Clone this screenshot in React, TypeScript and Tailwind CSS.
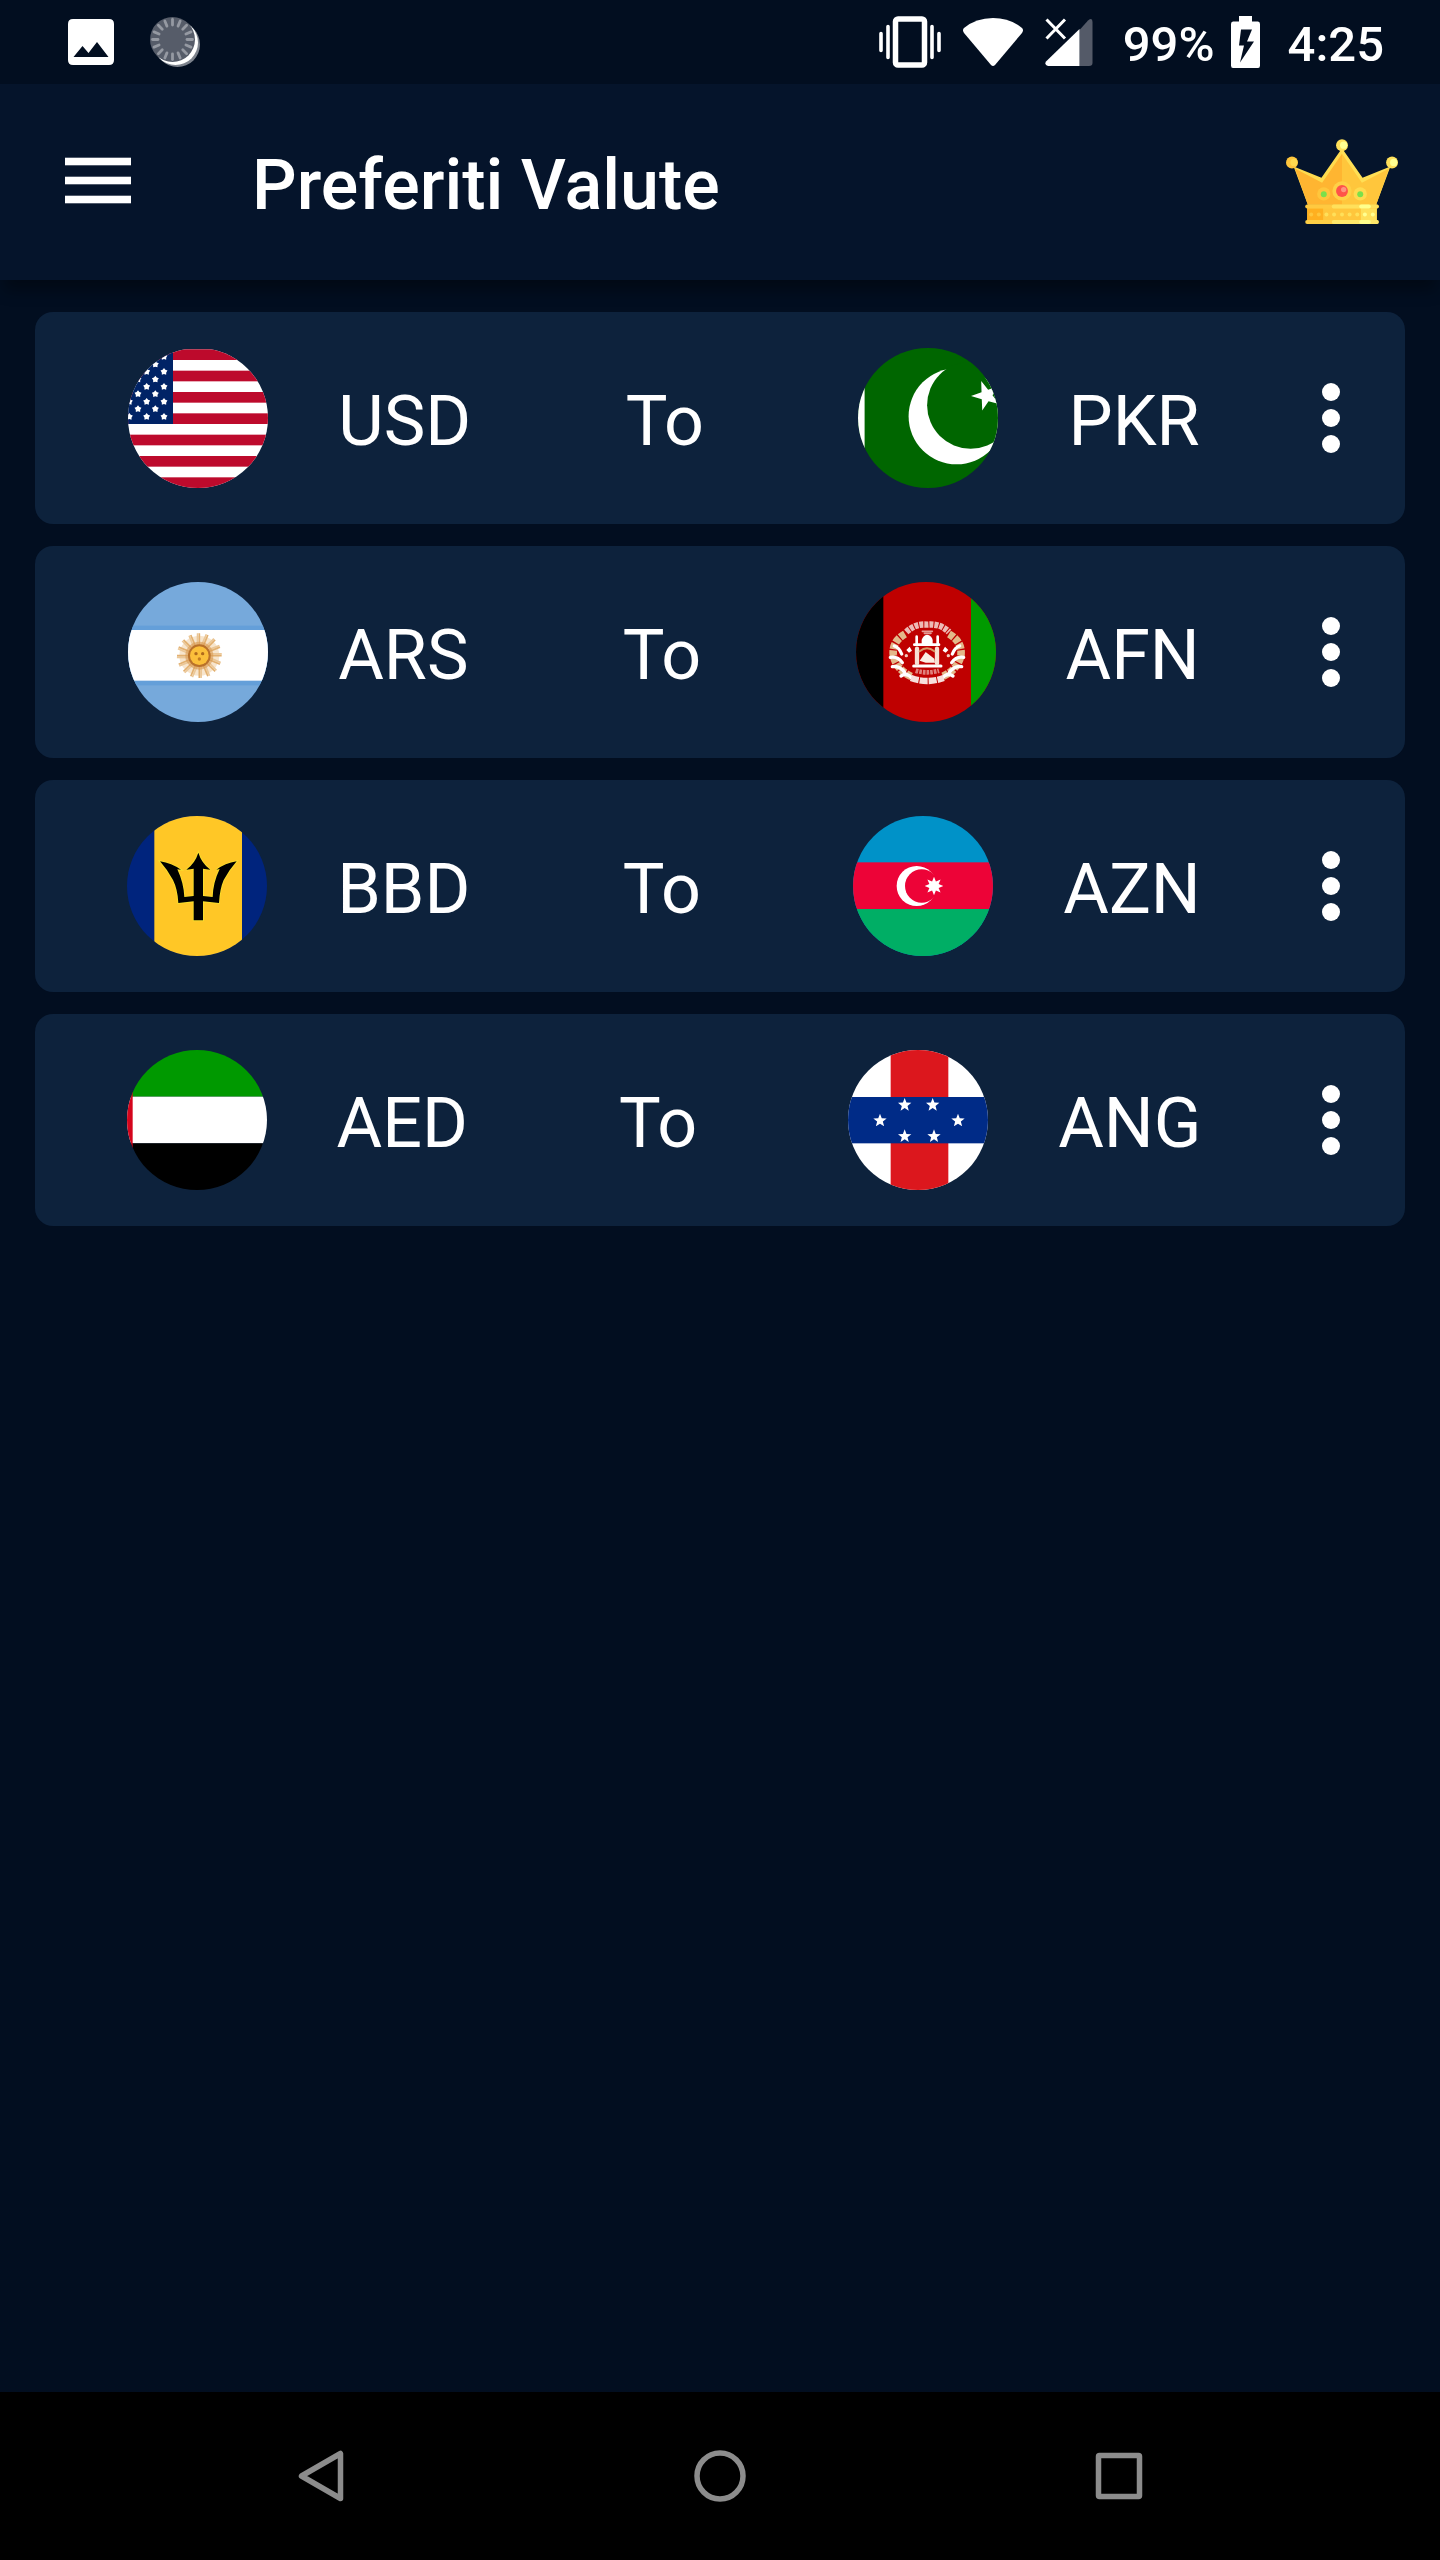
import React from "react";

type FlagProps = { box: string; label: string; children: React.ReactNode };

function Flag({ box, label, children }: FlagProps) {
  return (
    <svg viewBox={box} role="img" aria-label={label} className="size-35 shrink-0 rounded-full">
      {children}
    </svg>
  );
}

/** Corner list of a regular star polygon. */
function starPoints(cx: number, cy: number, outer: number, inner: number, tips = 5, start = -90) {
  const pts: string[] = [];
  for (let i = 0; i < tips * 2; i++) {
    const r = i % 2 === 0 ? outer : inner;
    const a = ((start + (i * 180) / tips) * Math.PI) / 180;
    pts.push(`${(cx + r * Math.cos(a)).toFixed(2)},${(cy + r * Math.sin(a)).toFixed(2)}`);
  }
  return pts.join(" ");
}

function UsaFlag() {
  const stripes = [0, 1, 2, 3, 4, 5, 6];
  const oddCols = [195, 143, 91];
  const evenCols = [169, 117];
  return (
    <Flag box="87 54 420 420" label="United States">
      <rect x="87" y="58" width="420" height="416" fill="#fff" />
      {stripes.map((i) => (
        <rect key={i} x="87" y={58 + i * 64} width="420" height="32" fill="#bd0a2c" />
      ))}
      <rect x="87" y="58" width="135" height="224" fill="#002366" />
      {oddCols.map((x) =>
        [80, 125, 170, 215, 260].map((y) => (
          <polygon key={`${x}-${y}`} points={starPoints(x, y, 11, 7)} fill="#fff" />
        )),
      )}
      {evenCols.map((x) =>
        [103, 148, 192, 237].map((y) => (
          <polygon key={`${x}-${y}`} points={starPoints(x, y, 11, 7)} fill="#fff" />
        )),
      )}
    </Flag>
  );
}

function PakistanFlag() {
  return (
    <Flag box="0 0 140 140" label="Pakistan">
      <rect width="140" height="140" fill="#006600" />
      <rect width="6.6" height="140" fill="#fff" />
      <circle cx="98.6" cy="68.3" r="48" fill="#fff" />
      <circle cx="112.6" cy="57.2" r="43.5" fill="#006600" />
      <polygon points={starPoints(128.5, 47.5, 15.5, 6, 5, 250)} fill="#fff" />
    </Flag>
  );
}

function ArgentinaFlag() {
  const rays = Array.from({ length: 32 }, (_, i) => i * 11.25);
  return (
    <Flag box="87 36 420 420" label="Argentina">
      <rect x="87" y="36" width="420" height="420" fill="#76a9db" />
      <rect x="87" y="167" width="420" height="179" fill="#649fd9" />
      <rect x="87" y="180" width="420" height="152" fill="#fff" />
      <circle cx="301" cy="257" r="60" fill="#f5dfc0" opacity="0.8" />
      {rays.map((a, i) => (
        <line
          key={a}
          x1="301"
          y1="227"
          x2={i % 2 ? 309 : 301}
          y2="190"
          stroke={i % 2 ? "#ebc797" : "#e2b070"}
          strokeWidth="5"
          transform={`rotate(${a} 301 257)`}
        />
      ))}
      <circle cx="301" cy="257" r="42" fill="#d89a52" opacity="0.6" />
      <circle cx="301" cy="257" r="34" fill="#b9712a" />
      <circle cx="301" cy="257" r="28" fill="#fbbf3b" />
      <circle cx="291" cy="251" r="5" fill="#b06a1c" />
      <circle cx="311" cy="251" r="5" fill="#b06a1c" />
      <circle cx="301" cy="267" r="5" fill="#c27d22" />
    </Flag>
  );
}

function AfghanistanFlag() {
  return (
    <Flag box="75 36 420 420" label="Afghanistan">
      <rect x="75" y="36" width="420" height="420" fill="#bf0000" />
      <rect x="75" y="36" width="82" height="420" fill="#000" />
      <rect x="420" y="36" width="75" height="420" fill="#009a00" />
      <g fill="none" strokeLinecap="round">
        <path d="M222 192 Q182 215 187 255 Q194 298 242 320" stroke="#e3b98a" strokeWidth="23" strokeDasharray="17 4" strokeLinecap="butt" />
        <path d="M354 192 Q394 215 390 255 Q382 298 334 320" stroke="#e3b98a" strokeWidth="23" strokeDasharray="17 4" strokeLinecap="butt" />
        <path d="M190 228 Q204 232 212 252 M178 262 Q200 258 214 278 M184 290 Q206 286 222 308 M210 318 Q228 306 244 326" stroke="#fff" strokeWidth="10" />
        <path d="M386 228 Q372 232 364 252 M398 262 Q376 258 362 278 M392 290 Q370 286 354 308 M366 318 Q348 306 332 326" stroke="#fff" strokeWidth="10" />
        <path d="M226 186 Q254 160 288 164 Q328 160 354 186" stroke="#edbab5" strokeWidth="19" strokeDasharray="12 3" strokeLinecap="butt" />
        <path d="M274 184 H304 M280 190 H300" stroke="#e59a94" strokeWidth="5" />
        <path d="M240 324 Q288 342 338 324" stroke="#f7dfdc" strokeWidth="19" strokeDasharray="24 3" strokeLinecap="butt" />
        <path d="M254 302 Q288 312 324 302" stroke="#e0807c" strokeWidth="14" strokeDasharray="8 3" strokeLinecap="butt" />
        <path d="M248 288 H330" stroke="#fff" strokeWidth="9" />
        <path d="M250 224 H324" stroke="#fff" strokeWidth="8" />
        <path d="M257 200 V222 M320 200 V222" stroke="#fff" strokeWidth="8" />
        <path d="M258 236 V280 M318 236 V280" stroke="#f7e0d4" strokeWidth="13" />
        <path d="M266 244 Q288 226 310 244" stroke="#d99a68" strokeWidth="6" />
      </g>
      <path d="M272 222 V210 Q276 196 288 194 Q302 196 305 210 V222 Z" fill="#fff" />
      <path d="M266 272 L284 246 L310 266 L312 278 L284 278 Z" fill="#fbeee4" />
      <path d="M226 240 L236 230 L243 242 L234 248 Z M352 240 L342 230 L335 242 L344 248 Z" fill="#fff" />
      <circle cx="226" cy="257" r="5" fill="#f3c9bd" />
      <circle cx="352" cy="257" r="5" fill="#f3c9bd" />
    </Flag>
  );
}

function BarbadosFlag() {
  return (
    <Flag box="84 48 420 420" label="Barbados">
      <rect x="84" y="48" width="420" height="420" fill="#00247d" />
      <rect x="166" y="48" width="263" height="420" fill="#ffc726" />
      <path
        d="M298 158 Q308 190 334 209 Q322 207 312 206 V288 L341 291 Q342 248 362 207 L352 209 Q378 190 413 184 Q390 210 374 240 Q362 268 360 309 L312 304 V361 H284 V304 L238 309 Q236 268 222 240 Q206 210 183 184 Q218 190 246 209 L235 208 Q254 248 256 291 L284 288 V206 Q274 207 262 209 Q288 190 298 158 Z"
        fill="#000"
        stroke="#f8e02c"
        strokeWidth="5"
        paintOrder="stroke"
      />
    </Flag>
  );
}

function AzerbaijanFlag() {
  return (
    <Flag box="72 48 420 420" label="Azerbaijan">
      <rect x="72" y="48" width="420" height="420" fill="#0092c8" />
      <rect x="72" y="187" width="420" height="140" fill="#ed0337" />
      <rect x="72" y="327" width="420" height="141" fill="#00ae65" />
      <circle cx="263" cy="258" r="60" fill="#fff" />
      <circle cx="278" cy="258" r="50" fill="#ed0337" />
      <polygon points={starPoints(315, 258, 28, 15, 8)} fill="#fff" />
    </Flag>
  );
}

function EmiratesFlag() {
  return (
    <Flag box="384 150 420 420" label="United Arab Emirates">
      <rect x="384" y="150" width="420" height="140" fill="#009900" />
      <rect x="384" y="290" width="420" height="140" fill="#fff" />
      <rect x="384" y="430" width="420" height="140" fill="#000" />
      <rect x="384" y="150" width="17" height="420" fill="#d4051c" />
    </Flag>
  );
}

function AntillesFlag() {
  const stars = [
    [227, 225],
    [311, 225],
    [153, 272],
    [387, 272],
    [227, 319],
    [315, 319],
  ];
  return (
    <Flag box="57 60 420 420" label="Netherlands Antilles">
      <rect x="57" y="60" width="420" height="420" fill="#fff" />
      <rect x="185" y="60" width="173" height="420" fill="#dc171d" />
      <rect x="57" y="201" width="420" height="139" fill="#002b87" />
      {stars.map(([x, y]) => (
        <polygon key={`${x}-${y}`} points={starPoints(x, y, 21, 9)} fill="#fff" />
      ))}
    </Flag>
  );
}

function PictureIcon() {
  return (
    <svg viewBox="0 0 46 46" className="size-[46px]" aria-hidden="true">
      <path fillRule="evenodd" fill="#fff" d="M5 0H41Q46 0 46 5V41Q46 46 41 46H5Q0 46 0 41V5Q0 0 5 0ZM5.500 38H40.500L29 23L20.500 34L14.500 27Z" />
    </svg>
  );
}

function EclipseIcon() {
  const ticks = Array.from({ length: 16 }, (_, i) => i * 22.5);
  return (
    <svg viewBox="0 0 50 50" className="size-[50px]" aria-hidden="true">
      <circle cx="27.500" cy="27.500" r="22.500" fill="#7d838d" />
      <circle cx="25.500" cy="25.500" r="22.500" fill="#fff" />
      <circle cx="22.500" cy="22.500" r="22.500" fill="#565c69" />
      {ticks.map((a) => (
        <line key={a} x1="22.500" y1="2.500" x2="22.500" y2="8" stroke="#9599a2" strokeWidth="2.800" strokeLinecap="round" transform={`rotate(${a} 22.5 22.5)`} />
      ))}
    </svg>
  );
}

function VibrateIcon() {
  return (
    <svg viewBox="0 0 62 52" className="h-[52px] w-[62px]" aria-hidden="true" fill="none" stroke="#fff">
      <rect x="16.500" y="3" width="29" height="46" rx="2.500" strokeWidth="5.500" />
      <path d="M9 10.500V41.500M53 10.500V41.500M2 17.500V34.500M60 17.500V34.500" strokeWidth="3.600" strokeLinecap="round" />
    </svg>
  );
}

function WifiIcon() {
  return (
    <svg viewBox="0 0 60 50" className="h-[50px] w-[60px]" aria-hidden="true">
      <path d="M1 11Q13 1 30 1Q47 1 59 11Q61 13 59 16L32 48Q30 50 28 48L1 16Q-1 13 1 11Z" fill="#fff" />
    </svg>
  );
}

function SignalIcon() {
  return (
    <svg viewBox="0 0 48 48" className="size-12" aria-hidden="true">
      <path d="M34.500 12L43 2.500Q47.500 -1 47.500 4V45Q47.500 48 44 48H34.500Z" fill="#545a68" />
      <path d="M34.500 11V48H3Q-1 47 1 43.500Z" fill="#fff" />
      <path d="M1.500 1.500L20 20.500M20 1.500L1.500 20.500" stroke="#020e20" strokeWidth="6" />
      <path d="M1.500 1.500L20 20.500M20 1.500L1.500 20.500" stroke="#fff" strokeWidth="3" />
    </svg>
  );
}

function BatteryIcon() {
  return (
    <svg viewBox="0 0 29 52" className="h-[52px] w-[29px]" aria-hidden="true">
      <path
        fillRule="evenodd"
        fill="#fff"
        d="M8 0H21V5.500H27Q29 5.500 29 8V49.500Q29 52 27 52H2Q0 52 0 49.500V8Q0 5.500 2 5.500H8ZM10 13.500L8 29.500H13L9 46.500L23 25.500H16L21 13.500Z"
      />
    </svg>
  );
}

function MenuIcon() {
  return (
    <svg viewBox="0 0 88 88" className="size-22" aria-hidden="true" fill="#fff">
      <rect x="11" y="19.700" width="66" height="7.600" />
      <rect x="11" y="38.700" width="66" height="7.600" />
      <rect x="11" y="57.700" width="66" height="7.600" />
    </svg>
  );
}

function CrownIcon() {
  return (
    <svg viewBox="137 118 338 258" className="h-[86px] w-28" aria-hidden="true">
      <path d="M160 200L244 234L306 145V316H203Z" fill="#ffdb4f" />
      <path d="M452 200L368 234L306 145V316H409Z" fill="#ffdf55" />
      <path d="M164 206L246 249L306 162V316H203Z" fill="#ffb531" />
      <path d="M448 206L366 249L306 162V316H409Z" fill="#ffc63c" />
      <circle cx="155" cy="188" r="18" fill="#ffc53c" />
      <circle cx="161" cy="188" r="11" fill="#ffd94f" />
      <circle cx="306" cy="136" r="18" fill="#ffe05a" />
      <circle cx="311" cy="136" r="11" fill="#ffff92" />
      <circle cx="457" cy="188" r="18" fill="#ffe05a" />
      <circle cx="462" cy="188" r="11" fill="#ffff92" />
      <circle cx="251" cy="283" r="20" fill="#ffc63c" />
      <circle cx="361" cy="283" r="20" fill="#ffdb4f" />
      <circle cx="306" cy="274" r="29" fill="#ffd147" />
      <circle cx="251" cy="284" r="9" fill="#7be04b" />
      <circle cx="361" cy="284" r="9" fill="#7be04b" />
      <circle cx="306" cy="274" r="18" fill="#ff5349" />
      <circle cx="311" cy="270" r="8" fill="#ff9480" />
      <rect x="201" y="320" width="210" height="46" fill="#ffc63c" />
      <rect x="201" y="326" width="48" height="36" fill="#ffb020" />
      <rect x="363" y="326" width="48" height="36" fill="#ffe05a" />
      <rect x="195" y="315" width="222" height="12" rx="6" fill="#ffc940" />
      <rect x="275" y="315" width="142" height="12" rx="6" fill="#ffe05a" />
      <rect x="358" y="315" width="35" height="12" rx="6" fill="#ffff8c" />
      <rect x="195" y="362" width="222" height="12" rx="6" fill="#ffcf45" />
      <rect x="275" y="362" width="142" height="12" rx="6" fill="#ffe86a" />
      <rect x="358" y="362" width="35" height="12" rx="6" fill="#ffff8c" />
      {[213, 236, 259, 282, 306, 329, 352, 375, 399].map((x) => (
        <circle key={x} cx={x} cy="345" r="6" fill={x < 250 ? "#ffc63c" : x < 360 ? "#ffe05a" : "#ffff92"} />
      ))}
    </svg>
  );
}

const favourites = [
  { from: "USD", fromFlag: <UsaFlag />, to: "PKR", toFlag: <PakistanFlag /> },
  { from: "ARS", fromFlag: <ArgentinaFlag />, to: "AFN", toFlag: <AfghanistanFlag /> },
  { from: "BBD", fromFlag: <BarbadosFlag />, to: "AZN", toFlag: <AzerbaijanFlag /> },
  { from: "AED", fromFlag: <EmiratesFlag />, to: "ANG", toFlag: <AntillesFlag /> },
];

export default function App() {
  return (
    <div className="flex min-h-screen flex-col bg-[#020e20] font-[Roboto,sans-serif] text-white">
      <div className="flex h-21 items-center justify-between pr-14 pl-17">
        <div className="flex items-center gap-9">
          <PictureIcon />
          <EclipseIcon />
        </div>
        <div className="flex items-center text-[49px] leading-[58px] font-medium">
          <div className="flex items-center gap-[22px]">
            <VibrateIcon />
            <WifiIcon />
            <SignalIcon />
          </div>
          <span className="ml-[30px] pt-1.5">99%</span>
          <div className="ml-4">
            <BatteryIcon />
          </div>
          <span className="ml-7 pt-1.5">4:25</span>
        </div>
      </div>

      <header className="flex h-49 items-center bg-[#05142b] pr-[42px] pl-[54px] shadow-[0_14px_14px_-4px_rgba(0,0,0,0.35)]">
        <button type="button" aria-label="Menu">
          <MenuIcon />
        </button>
        <h1 className="ml-[110px] flex-1 pt-1.5 text-[70px] leading-[82px] font-medium">Preferiti Valute</h1>
        <button type="button" aria-label="Premium">
          <CrownIcon />
        </button>
      </header>

      <main className="flex-1 px-[35px] pt-8">
        <ul className="flex flex-col gap-[22px]">
          {favourites.map((pair) => (
            <li key={pair.from} className="flex h-53 items-center rounded-[18px] bg-[#0d223c] pr-5 pl-4 text-[70px] leading-[82px]">
              <div className="flex flex-1 items-center justify-around">
                <div className="flex items-center gap-[70px]">
                  {pair.fromFlag}
                  <span className="pt-1.5">{pair.from}</span>
                </div>
                <span className="pt-1.5">To</span>
                <div className="flex items-center gap-[70px]">
                  {pair.toFlag}
                  <span className="pt-1.5">{pair.to}</span>
                </div>
              </div>
              <button type="button" aria-label={`Options for ${pair.from} to ${pair.to}`} className="flex h-35 w-27 flex-col items-center justify-center gap-2">
                <span className="size-[18px] rounded-full bg-white" />
                <span className="size-[18px] rounded-full bg-white" />
                <span className="size-[18px] rounded-full bg-white" />
              </button>
            </li>
          ))}
        </ul>
      </main>

      <nav className="grid h-42 grid-cols-3 bg-black px-[121px]" aria-label="System">
        <button type="button" aria-label="Back" className="flex items-center justify-center">
          <svg viewBox="0 0 46 52" className="h-[52px] w-[46px]" fill="none" stroke="#8c8c8c" strokeWidth="5.500" strokeLinejoin="round">
            <path d="M42.500 3.500V48.500L3.500 26Z" />
          </svg>
        </button>
        <button type="button" aria-label="Home" className="flex items-center justify-center">
          <svg viewBox="0 0 52 52" className="size-13" fill="none" stroke="#8c8c8c" strokeWidth="5.500">
            <circle cx="26" cy="26" r="23" />
          </svg>
        </button>
        <button type="button" aria-label="Recent apps" className="flex items-center justify-center">
          <svg viewBox="0 0 48 48" className="size-12" fill="none" stroke="#8c8c8c" strokeWidth="5.500" strokeLinejoin="round">
            <rect x="3.500" y="3.500" width="41" height="41" rx="1" />
          </svg>
        </button>
      </nav>
    </div>
  );
}
